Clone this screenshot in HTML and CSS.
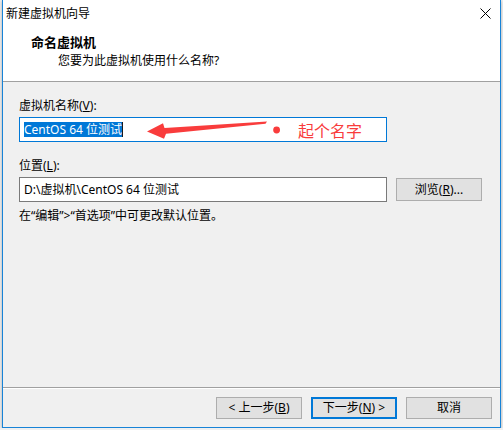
FILE: index.html
```html
<!DOCTYPE html>
<html lang="zh-CN">
<head>
<meta charset="utf-8">
<title>新建虚拟机向导</title>
<link rel="stylesheet" href="styles.css">
</head>
<body>
<div class="window">
  <div class="head">
    <div class="titlebar">
      <span class="title">新建虚拟机向导</span>
      <svg class="close" width="11" height="11" viewBox="0 0 11 11"><path d="M0.5 0.5 L10.5 10.5 M10.5 0.5 L0.5 10.5" stroke="#000" stroke-width="1" fill="none"/></svg>
    </div>
    <div class="heading">命名虚拟机</div>
    <div class="sub">您要为此虚拟机使用什么名称?</div>
  </div>
  <div class="body">
    <div class="label">虚拟机名称(<u>V</u>):</div>
    <div class="input focus"><span class="sel">CentOS 64 位测试</span><span class="caret"></span></div>
    <div class="label loc">位置(<u>L</u>):</div>
    <div class="row">
      <div class="input">D:\虚拟机\CentOS 64 位测试</div>
      <button class="btn browse">浏览(<u>R</u>)...</button>
    </div>
    <div class="hint">在“编辑”&gt;“首选项”中可更改默认位置。</div>
  </div>
  <div class="footer">
    <button class="btn">&lt; 上一步(<u>B</u>)</button>
    <button class="btn default">下一步(<u>N</u>) &gt;</button>
    <button class="btn">取消</button>
  </div>
  <svg class="annot" width="503" height="430" viewBox="0 0 503 430">
    <polygon fill="#f93c3c" points="147,131.5 163,123.3 164.5,128 267,121.5 265.5,123.8 166,133.8 164,138.7"/>
    <circle cx="276.6" cy="130" r="3.4" fill="#f93c3c"/>
  </svg>
  <span class="annot-text">起个名字</span>
</div>
</body>
</html>
```
FILE: styles.css
```css
body {
  margin: 0;
  background: #f0f0f0;
  font-family: "Noto Sans", "Noto Sans CJK SC", sans-serif;
  font-size: 12px;
  color: #000;
}
.window {
  position: relative;
  margin-left: 2px;
  width: 497px;
  height: 427px;
  border: 1px solid #1883d7;
  border-top: 0;
  background: #f0f0f0;
  display: flex;
  flex-direction: column;
  box-shadow: 0 1px 3px rgba(0, 0, 0, 0.3);
}
.head {
  flex: none;
  height: 81px;
  background: #fff;
  border-bottom: 1px solid #a0a0a0;
}
.titlebar {
  height: 28px;
  display: flex;
  justify-content: space-between;
  align-items: center;
  padding: 0 9px 0 3px;
  line-height: 16px;
}
.close {
  align-self: flex-start;
  margin-top: 8px;
}
.heading {
  margin: 6px 0 0 28px;
  font-weight: bold;
  font-size: 13px;
  line-height: 16px;
}
.sub {
  margin: 3px 0 0 55px;
  line-height: 16px;
}
.body {
  flex: 1;
  padding: 16px 0 0 16px;
}
.label {
  line-height: 16px;
}
.label.loc {
  margin-top: 16px;
}
.input {
  margin-top: 3px;
  width: 368px;
  height: 25px;
  box-sizing: border-box;
  border: 1px solid #7a7a7a;
  background: #fff;
  padding-left: 4px;
  display: flex;
  align-items: center;
  line-height: 16px;
  white-space: nowrap;
}
.input.focus {
  border-color: #0078d7;
}
.sel {
  display: inline-block;
  background: #0078d7;
  color: #fff;
  line-height: 15px;
  height: 15px;
}
.caret {
  display: inline-block;
  width: 1px;
  height: 15px;
  background: #1a1a1a;
}
.row {
  display: flex;
  align-items: center;
  gap: 9px;
  margin-top: 3px;
}
.row .input {
  margin-top: 0;
}
.hint {
  margin-top: 6px;
  line-height: 16px;
}
.footer {
  flex: none;
  height: 40px;
  box-sizing: border-box;
  border-top: 1px solid #a0a0a0;
  box-shadow: inset 0 1px #fff;
  display: flex;
  justify-content: flex-end;
  align-items: flex-start;
  gap: 9px;
  padding: 9px 8px 0 0;
}
.btn {
  width: 86px;
  height: 22px;
  box-sizing: border-box;
  border: 1px solid #adadad;
  background: #e1e1e1;
  font: inherit;
  color: #000;
  padding: 0;
  line-height: 18px;
}
.btn.browse {
  height: 23px;
}
.btn.default {
  border: 2px solid #0078d7;
}
.annot {
  position: absolute;
  left: -3px;
  top: 0;
  pointer-events: none;
}
.annot-text {
  position: absolute;
  left: 295px;
  top: 120px;
  font-family: "Noto Sans CJK SC", sans-serif;
  font-size: 16px;
  line-height: 20px;
  color: #f93c3c;
}
```
